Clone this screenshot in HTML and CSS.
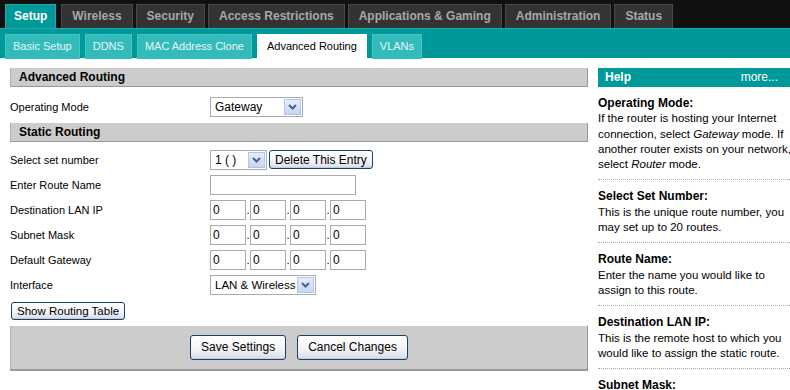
FILE: index.html
```html
<!DOCTYPE html>
<html lang="en">

<head>
    <meta charset="UTF-8">
    <title>Advanced Routing</title>
    <link rel="stylesheet" href="styles.css">
</head>

<body>
    <!-- main tabs -->
    <div class="topbar">
        <ul class="tabs">
            <li class="on">Setup</li>
            <li>Wireless</li>
            <li>Security</li>
            <li>Access Restrictions</li>
            <li>Applications &amp; Gaming</li>
            <li>Administration</li>
            <li>Status</li>
        </ul>
    </div>
    <!-- sub tabs -->
    <div class="subbar">
        <ul class="subtabs">
            <li>Basic Setup</li>
            <li>DDNS</li>
            <li>MAC Address Clone</li>
            <li class="on">Advanced Routing</li>
            <li>VLANs</li>
        </ul>
    </div>

    <div class="page">
        <div class="main">
            <div class="sec first">Advanced Routing</div>
            <div class="row mode">
                <span class="label">Operating Mode</span>
                <div class="select w-mode"><span class="val">Gateway</span><span class="arrow"><svg width="15" height="15" viewBox="0 0 15 15"><path d="M4 6 L7.5 9.5 L11 6" fill="none" stroke="#4d6185" stroke-width="2"/></svg></span></div>
            </div>

            <div class="sec">Static Routing</div>
            <div class="rows">
                <div class="row">
                    <span class="label">Select set number</span>
                    <div class="select w-set"><span class="val">1 ( )</span><span class="arrow"><svg width="15" height="15" viewBox="0 0 15 15"><path d="M4 6 L7.5 9.5 L11 6" fill="none" stroke="#4d6185" stroke-width="2"/></svg></span></div>
                    <button class="btn small">Delete This Entry</button>
                </div>
                <div class="row">
                    <span class="label">Enter Route Name</span>
                    <input class="text name" type="text" value="">
                </div>
                <div class="row">
                    <span class="label">Destination LAN IP</span>
                    <input class="text ip" value="0"><span class="dot">.</span><input class="text ip" value="0"><span class="dot">.</span><input class="text ip" value="0"><span class="dot">.</span><input class="text ip" value="0">
                </div>
                <div class="row">
                    <span class="label">Subnet Mask</span>
                    <input class="text ip" value="0"><span class="dot">.</span><input class="text ip" value="0"><span class="dot">.</span><input class="text ip" value="0"><span class="dot">.</span><input class="text ip" value="0">
                </div>
                <div class="row">
                    <span class="label">Default Gateway</span>
                    <input class="text ip" value="0"><span class="dot">.</span><input class="text ip" value="0"><span class="dot">.</span><input class="text ip" value="0"><span class="dot">.</span><input class="text ip" value="0">
                </div>
                <div class="row">
                    <span class="label">Interface</span>
                    <div class="select w-if"><span class="val">LAN &amp; Wireless</span><span class="arrow"><svg width="15" height="15" viewBox="0 0 15 15"><path d="M4 6 L7.5 9.5 L11 6" fill="none" stroke="#4d6185" stroke-width="2"/></svg></span></div>
                </div>
            </div>

            <button class="btn small table">Show Routing Table</button>

            <div class="actions">
                <button class="btn big">Save Settings</button>
                <button class="btn big">Cancel Changes</button>
            </div>
        </div>

        <div class="help">
            <div class="help-head"><b>Help</b><span>more...</span></div>
            <div class="tip">
                <h4>Operating Mode:</h4>
                <p>If the router is hosting your Internet<br>connection, select <i>Gateway</i> mode. If<br>another router exists on your network,<br>select <i>Router</i> mode.</p>
            </div>
            <div class="tip">
                <h4>Select Set Number:</h4>
                <p>This is the unique route number, you<br>may set up to 20 routes.</p>
            </div>
            <div class="tip">
                <h4>Route Name:</h4>
                <p>Enter the name you would like to<br>assign to this route.</p>
            </div>
            <div class="tip">
                <h4>Destination LAN IP:</h4>
                <p>This is the remote host to which you<br>would like to assign the static route.</p>
            </div>
            <div class="tip">
                <h4>Subnet Mask:</h4>
            </div>
        </div>
    </div>
</body>

</html>
```

FILE: styles.css
```css
* {
    margin: 0;
    padding: 0;
    list-style: none;
    box-sizing: border-box;
}

body {
    font-family: Tahoma, "Liberation Sans", Arial, sans-serif;
    font-size: 11px;
    color: #000;
    background: #fff;
    overflow: hidden;
}

/* main tabs */
.topbar {
    background: #111111;
    height: 28px;
    padding: 4px 0 0 5px;
}

.tabs {
    display: flex;
    gap: 3px;
    height: 24px;
}

.tabs li {
    background: #333333;
    border: 1px solid #4a4a4a;
    border-bottom: none;
    color: #a8a8a8;
    font-weight: bold;
    font-size: 12px;
    line-height: 23px;
    padding: 0 10px;
}

.tabs li.on {
    background: #009999;
    border-color: #22aaaa;
    color: #fff;
    padding: 0 8px;
    margin-right: 2px;
}

/* sub tabs */
.subbar {
    background: #009999;
    border-top: 1px solid #22aaaa;
    height: 30px;
    padding: 5px 0 0 5px;
}

.subtabs {
    display: flex;
    gap: 5px;
    height: 25px;
}

.subtabs li {
    background: #33bbbb;
    border: 1px solid #44c4c4;
    border-bottom: none;
    color: #e8f6f6;
    font-size: 11px;
    line-height: 23px;
    padding: 0 7px;
}

.subtabs li.on {
    background: #fff;
    border-color: #fff;
    color: #000;
    padding: 0 9px;
}

/* page */
.page {
    display: flex;
    gap: 10px;
    padding: 10px 0 0 10px;
}

.main {
    width: 578px;
    flex: none;
}

.sec {
    background: #cccccc;
    border-left: 1px solid #b0b0b0;
    border-right: 1px solid #999;
    border-bottom: 1px solid #999;
    height: 19px;
    line-height: 18px;
    padding-left: 8px;
    font-weight: bold;
    font-size: 12px;
    margin-top: 4px;
}

.sec.first {
    margin-top: 0;
}

.row {
    display: flex;
    align-items: center;
    height: 25px;
}

.row.mode {
    margin-top: 7px;
}

.rows {
    margin-top: 5px;
}

.label {
    width: 200px;
    flex: none;
}

/* fake select, XP look */
.select {
    display: flex;
    align-items: center;
    justify-content: space-between;
    height: 20px;
    border: 1px solid #a5acb2;
    background: #fff;
    padding: 0 1px 0 4px;
    font-size: 12px;
    white-space: nowrap;
}

.select .arrow {
    display: flex;
    flex: none;
    width: 17px;
    height: 16px;
    border: 1px solid #b4c5e8;
    background: linear-gradient(#e6eefc, #c6d5f5);
    align-items: center;
    justify-content: center;
}

.w-mode { width: 93px; }
.w-set { width: 57px; }
.w-if { width: 106px; font-size: 11.5px; }

.text {
    height: 20px;
    border: 1px solid #a5acb2;
    font-family: inherit;
    font-size: 12px;
    padding: 0 2px;
    color: #000;
}

.text.name { width: 146px; }
.text.ip { width: 36px; }

.dot {
    width: 4px;
    text-align: center;
    line-height: 26px;
}

/* buttons */
.btn {
    font-family: inherit;
    color: #000;
    border: 1px solid #1f3f6b;
    border-radius: 3px;
    background: linear-gradient(#ffffff, #f2f3f6 60%, #d6dbe8);
    box-shadow: inset 0 -1px 0 #c3cbdc;
}

.btn.small {
    height: 19px;
    padding: 0 5px;
    font-size: 12px;
    margin-left: 2px;
}

.btn.table {
    display: block;
    margin: 5px 0 0 1px;
    height: 18px;
    padding: 0 5px;
    font-size: 11.5px;
}

.btn.big {
    height: 25px;
    font-size: 12px;
    padding: 0 10px;
}

.actions {
    margin-top: 6px;
    background: #cccccc;
    border-left: 1px solid #b0b0b0;
    border-right: 1px solid #999;
    border-bottom: 2px solid #999;
    height: 45px;
    display: flex;
    justify-content: center;
    align-items: center;
    gap: 11px;
    padding-bottom: 1px;
}

/* help column */
.help {
    flex: 1;
}

.help-head {
    display: flex;
    justify-content: space-between;
    background: #009999;
    color: #fff;
    height: 19px;
    line-height: 19px;
    padding: 0 12px 0 7px;
    font-size: 12px;
}

.tip {
    padding: 9px 0 7px 0;
    border-bottom: 1px dotted #aaa;
    width: 192px;
    line-height: 15.3px;
}

.tip h4 {
    font-size: 12px;
}

.tip p {
    font-size: 11.5px;
    white-space: nowrap;
}
```
